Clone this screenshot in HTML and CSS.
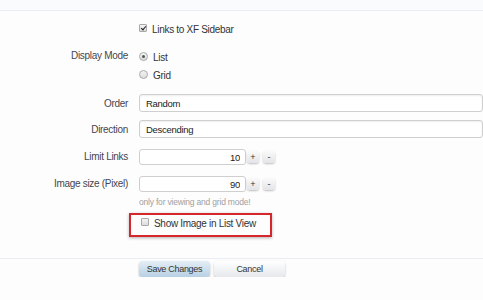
FILE: index.html
```
<!DOCTYPE html>
<html lang="en">
<head>
    <meta charset="UTF-8">
    <title>Link Options</title>
    <link rel="stylesheet" href="styles.css">
</head>
<body>
    <div class="top-band"></div>

    <form class="options-form">
        <dl class="ctrl-unit first">
            <dt></dt>
            <dd>
                <label class="check"><input type="checkbox" checked> Links to XF Sidebar</label>
            </dd>
        </dl>

        <dl class="ctrl-unit">
            <dt>Display Mode</dt>
            <dd>
                <ul class="choice-list">
                    <li><label class="check"><input type="radio" name="mode" checked> List</label></li>
                    <li><label class="check"><input type="radio" name="mode"> Grid</label></li>
                </ul>
            </dd>
        </dl>

        <dl class="ctrl-unit text-row">
            <dt>Order</dt>
            <dd><input type="text" class="text-ctrl" value="Random"></dd>
        </dl>

        <dl class="ctrl-unit text-row">
            <dt>Direction</dt>
            <dd><input type="text" class="text-ctrl" value="Descending"></dd>
        </dl>

        <dl class="ctrl-unit spin-row">
            <dt>Limit Links</dt>
            <dd>
                <div class="spin-box">
                    <input type="text" class="num-ctrl" value="10">
                    <button type="button" class="spin-btn">+</button>
                    <button type="button" class="spin-btn">-</button>
                </div>
            </dd>
        </dl>

        <dl class="ctrl-unit spin-row">
            <dt>Image size (Pixel)</dt>
            <dd>
                <div class="spin-box">
                    <input type="text" class="num-ctrl" value="90">
                    <button type="button" class="spin-btn">+</button>
                    <button type="button" class="spin-btn">-</button>
                </div>
                <p class="explain">only for viewing and grid mode!</p>
            </dd>
        </dl>

        <dl class="ctrl-unit">
            <dt></dt>
            <dd>
                <div class="marked">
                    <label class="check"><input type="checkbox"> Show Image in List View</label>
                </div>
            </dd>
        </dl>

        <div class="submit-unit">
            <button type="button" class="button primary">Save Changes</button>
            <button type="button" class="button">Cancel</button>
        </div>
    </form>
</body>
</html>
```

FILE: styles.css
```
body {
    margin: 0;
    background-color: #fdfdfe;
    font-family: "Liberation Sans", Arial, sans-serif;
    font-size: 10px;
    letter-spacing: -0.3px;
    color: #333;
    overflow: hidden;
}

.top-band {
    height: 10px;
    background-color: #fafbfc;
    border-bottom: 1px solid #e7edf2;
}

.options-form {
    padding-top: 11px;
}

.ctrl-unit {
    display: flex;
    margin: 0;
}

.ctrl-unit dt {
    box-sizing: border-box;
    width: 139px;
    padding-right: 11px;
    text-align: right;
    color: #45454f;
    flex-shrink: 0;
}

.ctrl-unit dd {
    margin: 0;
    flex: 1;
}

.check {
    display: flex;
    align-items: center;
    gap: 5px;
    color: #333;
    height: 14px;
    white-space: nowrap;
}

.check input {
    appearance: none;
    margin: 0 0 2px;
    width: 8px;
    height: 8px;
    border: 1px solid #a9a9a9;
    border-radius: 1px;
    background: linear-gradient(#f4f4f4, #dcdcdc);
    box-sizing: border-box;
    position: relative;
}

.check input[type="checkbox"]:checked::after {
    content: "";
    position: absolute;
    left: 2px;
    top: 0;
    width: 2px;
    height: 4px;
    border: solid #222;
    border-width: 0 1.5px 1.5px 0;
    transform: rotate(40deg);
}

.check input[type="radio"] {
    border-radius: 50%;
    width: 9px;
    height: 9px;
}

.check input[type="radio"]:checked::after {
    content: "";
    position: absolute;
    left: 2px;
    top: 2px;
    width: 3px;
    height: 3px;
    border-radius: 50%;
    background: #555;
}

.ctrl-unit.first {
    margin-bottom: 14px;
}

.choice-list {
    list-style: none;
    margin: 0;
    padding: 0;
}

.choice-list li {
    margin-bottom: 4px;
}

.text-row {
    margin-top: 8px;
    align-items: center;
}

.text-ctrl {
    width: 100%;
    box-sizing: border-box;
    height: 18px;
    border: 1px solid #cfcfcf;
    border-radius: 3px;
    padding: 0 6px;
    font-family: inherit;
    font-size: 9.5px;
    letter-spacing: -0.3px;
    color: #222;
    background: #fff;
    box-shadow: inset 0 1px 2px #eee;
}

.spin-row {
    margin-top: 11px;
    align-items: flex-start;
}

.spin-row dt {
    line-height: 16px;
}

.spin-box {
    display: flex;
    align-items: center;
}

.num-ctrl {
    width: 107px;
    height: 16px;
    box-sizing: border-box;
    border: 1px solid #cfcfcf;
    border-radius: 3px;
    padding: 0 5px;
    text-align: right;
    font-family: inherit;
    font-size: 9.5px;
    letter-spacing: -0.3px;
    color: #222;
    background: #fff;
}

.spin-btn {
    width: 12px;
    height: 12px;
    margin-left: 1px;
    padding: 0;
    border: none;
    border-radius: 3px;
    background: linear-gradient(#fafafa, #e2e4e8);
    box-shadow: 0 1px 2px rgba(0,0,0,0.25);
    font-family: inherit;
    font-size: 9px;
    line-height: 12px;
    color: #333;
}

.spin-btn + .spin-btn {
    margin-left: 4px;
}

.explain {
    margin: 5px 0 0;
    font-size: 8.5px;
    letter-spacing: -0.2px;
    color: #a0a0a0;
}

.marked {
    display: inline-block;
    margin-top: 6px;
    margin-left: -10px;
    padding: 1px 14px 5px 10px;
    border: 2px solid #d4262b;
    box-shadow: 0 1px 3px rgba(0,0,0,0.3);
}

.submit-unit {
    margin-top: 21px;
    border-top: 1px solid #e7edf2;
    padding: 2px 0 0 139px;
    display: flex;
    gap: 4px;
}

.button {
    width: 71px;
    height: 16px;
    padding: 0;
    border: none;
    border-radius: 4px;
    background: linear-gradient(#ffffff, #e6e8ec);
    box-shadow: 0 1px 2px rgba(0,0,0,0.3);
    font-family: inherit;
    font-size: 9px;
    letter-spacing: -0.3px;
    color: #333;
}

.button.primary {
    background: linear-gradient(#e4eef6, #b7d0e3);
}
```
